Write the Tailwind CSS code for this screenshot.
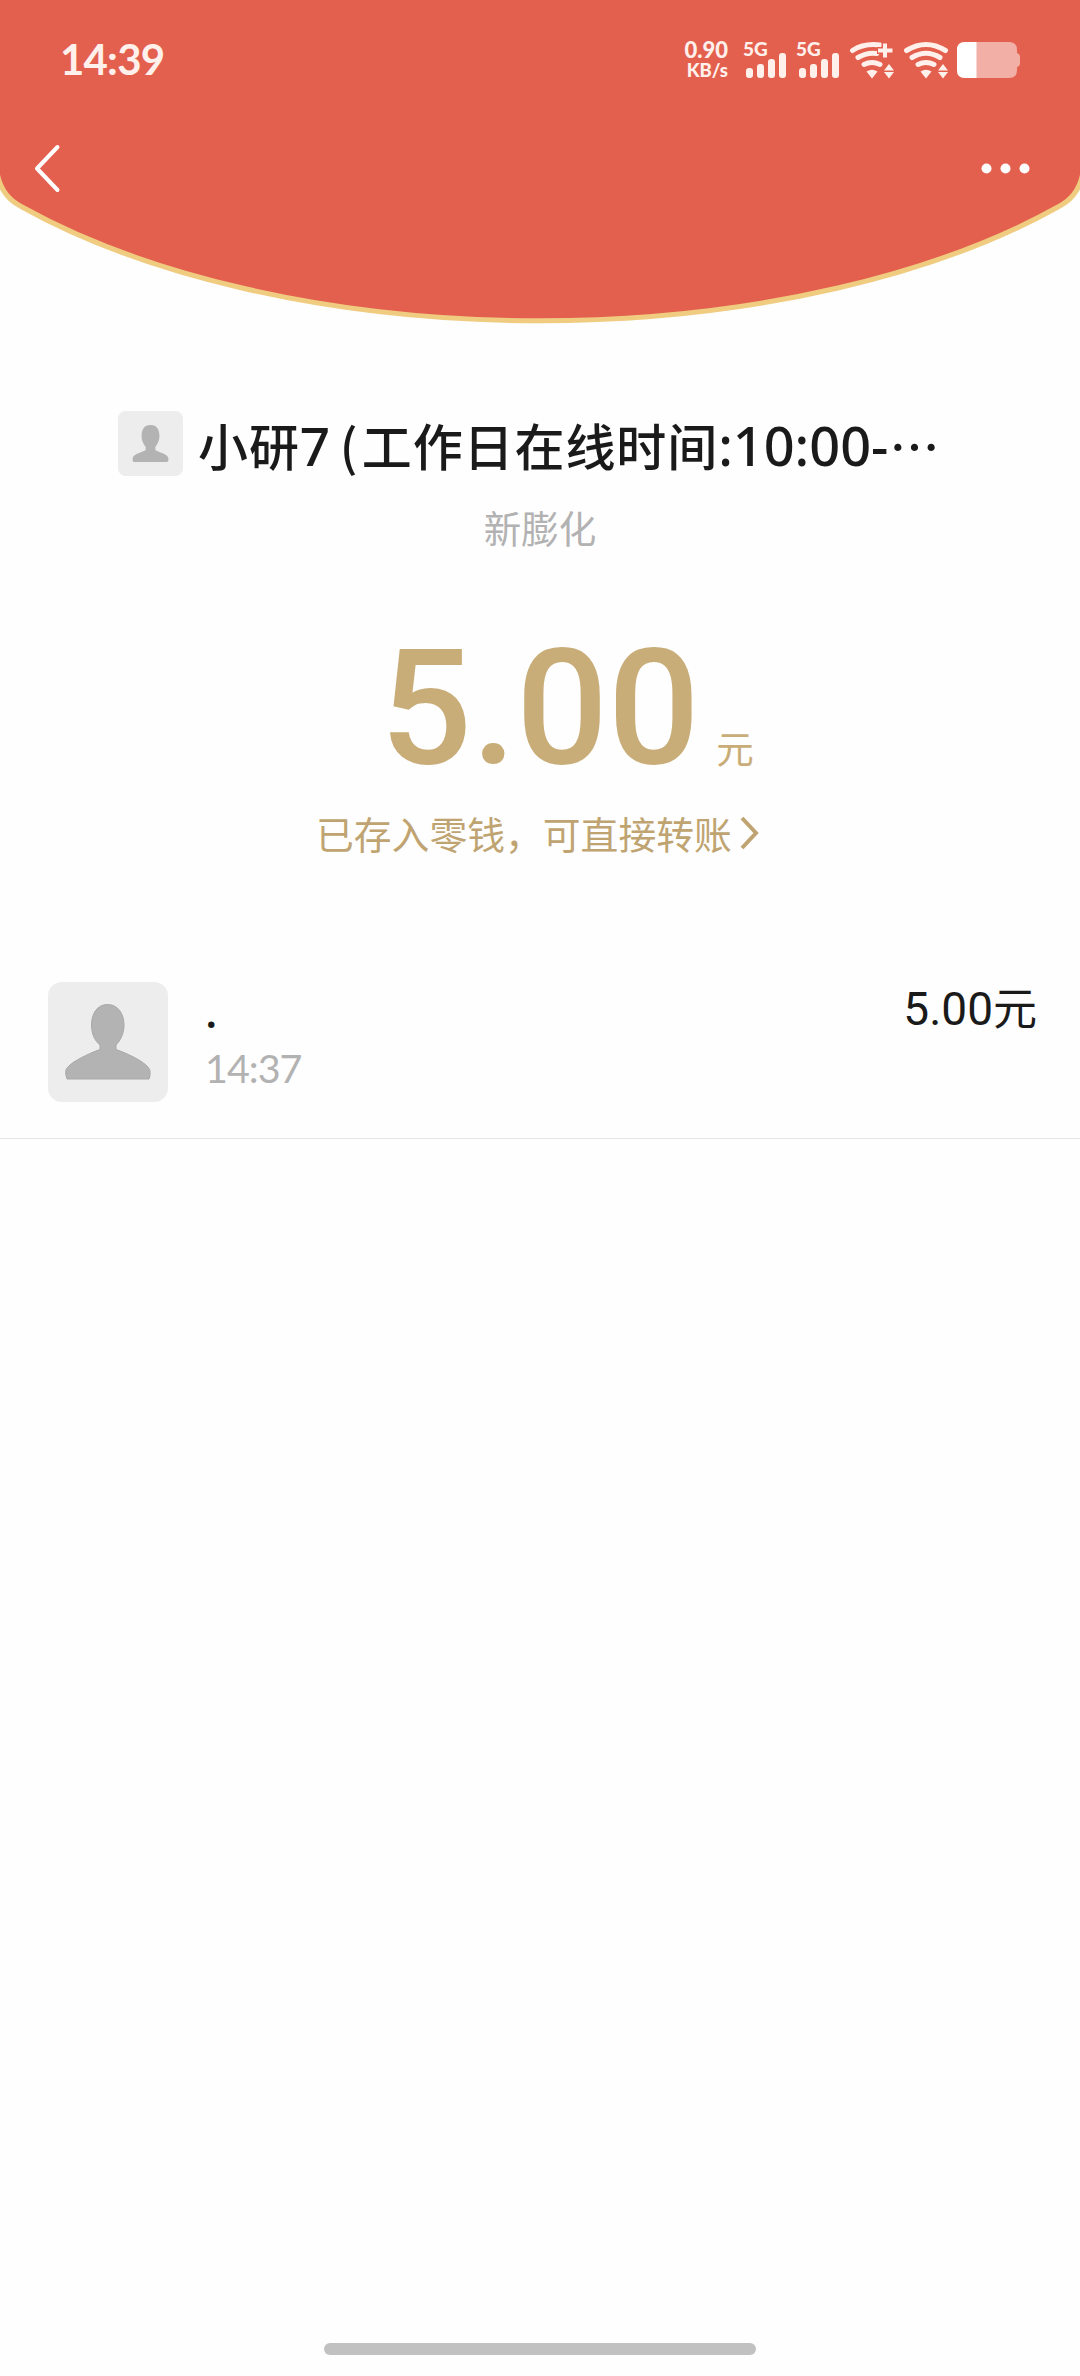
<!DOCTYPE html>
<html lang="zh-CN">
<head>
<meta charset="utf-8">
<title>红包详情</title>
<script src="https://cdn.jsdelivr.net/npm/@tailwindcss/browser@4"></script>
</head>
<body class="bg-white">
<div class="flex h-[2376px] w-[1080px] flex-col overflow-hidden bg-[#fefefe] font-['Noto_Sans_CJK_SC',sans-serif] text-[#1a1a1a]">
  <header class="relative h-[330px] shrink-0">
    <svg class="absolute inset-0" width="1080" height="330" viewBox="0 0 1080 330">
      <path d="M-4 -10V160C-4 184 6 199 22 207A683 326.6 0 0 0 1058 207C1074 199 1084 184 1084 160V-10Z" fill="#e4604e" stroke="#efcc80" stroke-width="5"/>
    </svg>
    <div class="relative flex h-[120px] items-start text-[#fff0ec]">
      <div class="ml-[60px] mt-[34px] w-[120px] whitespace-nowrap font-['Lato',sans-serif] text-[42px] leading-[50px] font-bold tracking-[-0.800px]">14:39</div>
      <div class="ml-[502px] mt-[39px] flex w-[46px] flex-col items-end whitespace-nowrap font-['Lato',sans-serif]">
        <span class="text-[22px] leading-[22px] font-black">0.90</span>
        <span class="text-[18.500px] leading-[19px] font-black">KB/s</span>
      </div>
      <div class="relative ml-[15px] mt-[40px] h-[40px] w-[43px]">
        <span class="block font-['Lato',sans-serif] text-[19px] leading-[18px] font-black">5G</span>
        <svg class="absolute inset-0" width="43" height="40" fill="currentColor"><rect x="3" y="28" width="7" height="10" rx="3"/><rect x="14" y="24" width="7" height="14" rx="3"/><rect x="25" y="19" width="7" height="19" rx="3"/><rect x="36" y="13" width="7" height="25" rx="3"/></svg>
      </div>
      <div class="relative ml-[10px] mt-[40px] h-[40px] w-[43px]">
        <span class="block font-['Lato',sans-serif] text-[19px] leading-[18px] font-black">5G</span>
        <svg class="absolute inset-0" width="43" height="40" fill="currentColor"><rect x="3" y="28" width="7" height="10" rx="3"/><rect x="14" y="24" width="7" height="14" rx="3"/><rect x="25" y="19" width="7" height="19" rx="3"/><rect x="36" y="13" width="7" height="25" rx="3"/></svg>
      </div>
      <svg class="ml-[10px] mt-[40px]" width="46" height="40" viewBox="0 0 46 40">
        <g fill="none" stroke="currentColor" stroke-width="5" stroke-linecap="round"><path d="M3.500 10.500Q15 3 31 5"/><path d="M9 17.500Q18 12 28 13.500"/><path d="M15 24.500Q23 20.500 31 24.500"/></g>
        <path d="M17.500 31.500Q23 28 28.500 31.500L23 38.500Z" fill="currentColor"/>
        <path d="M36 1V19M28 10.500H45" stroke="#e4604e" stroke-width="7"/>
        <path d="M36 3.500V17.500M29 10.500H43.500" stroke="currentColor" stroke-width="4"/>
        <path d="M40 24L45 30.500H35ZM40 38.500L45 32H35Z" fill="currentColor"/>
      </svg>
      <svg class="ml-[8px] mt-[40px]" width="46" height="40" viewBox="0 0 46 40">
        <g fill="none" stroke="currentColor" stroke-width="5" stroke-linecap="round"><path d="M3.500 10.500Q23 -1.500 42.500 10.500"/><path d="M9 17.500Q23 9 37 17.500"/><path d="M15 24.500Q23 20.500 31 24.500"/></g>
        <path d="M17.500 31.500Q23 28 28.500 31.500L23 38.500Z" fill="currentColor"/>
        <path d="M40 24L45 30.500H35ZM40 38.500L45 32H35Z" fill="currentColor"/>
      </svg>
      <svg class="ml-[8px] mt-[40px]" width="64" height="40" viewBox="0 0 64 40">
        <path d="M8 2H52Q60 2 60 10V13Q63 14 63 17V23Q63 26 60 27V30Q60 38 52 38H8Q0 38 0 30V10Q0 2 8 2Z" fill="#f1afa6"/>
        <path d="M19.500 2H8Q0 2 0 10V30Q0 38 8 38H19.500Z" fill="#fff"/>
      </svg>
    </div>
    <nav class="relative flex h-[96px] items-center justify-between pr-[49px] pl-[31px] text-white">
      <svg width="30" height="50" viewBox="0 0 30 50" fill="none" stroke="currentColor" stroke-width="4" stroke-linecap="round" stroke-linejoin="round"><path d="M26.500 4L6 25.500L26.500 47"/></svg>
      <svg width="50" height="12" viewBox="0 0 50 12" fill="currentColor"><circle cx="5.500" cy="6.500" r="5"/><circle cx="24.500" cy="6.500" r="5"/><circle cx="43.500" cy="6.500" r="5"/></svg>
    </nav>
  </header>

  <main class="flex grow flex-col">
    <div class="mt-[80px] flex h-[68px] pl-[118px]">
      <svg class="mt-px shrink-0" width="65" height="65" viewBox="0 0 120 120"><rect width="120" height="120" rx="14" fill="#ededed"/><path d="M60 26C72 26 76.500 35 76.500 46C76.500 55 72 62 69 66V72C76 77 93 79 93 88V92Q93 94 90 94H30Q27 94 27 92V88C27 79 44 77 51 72V66C48 62 43.500 55 43.500 46C43.500 35 48 26 60 26Z" fill="#b3b3b3"/></svg>
      <h1 class="ml-[15px] flex items-baseline text-[50px] leading-[68px] font-medium tracking-[0.900px] whitespace-nowrap">
        <span>小研</span><span class="w-[31px] font-['Noto_Sans',sans-serif] text-[53px]">7</span><span class="w-[31px] pl-[9px]">(</span><span>工作日在线时间</span><span class="font-['Noto_Sans',sans-serif] text-[54px] tracking-[0px]">:10:00-</span><span class="pl-px">⋯</span>
      </h1>
    </div>
    <p class="mt-[24px] text-center text-[37.500px] leading-[50px] text-[#b2b2b2]">新膨化</p>
    <div class="mt-[81px] flex h-[150px] items-baseline pl-[380px] text-[#c9ad78]">
      <span class="font-['Roboto',sans-serif] text-[162px] leading-[150px] font-medium tracking-[-0.500px]">5.00</span>
      <span class="ml-[17px] text-[37.500px] leading-[50px]">元</span>
    </div>
    <a class="mt-[25px] flex h-[50px] items-center pl-[316px] text-[37.800px] leading-[50px] text-[#bfa472]">已存入零钱，可直接转账<svg class="ml-[8px]" width="20" height="34" viewBox="0 0 20 34" fill="none" stroke="currentColor" stroke-width="4"><path d="M2 2L16 17L2 32"/></svg></a>
    <div class="mt-[122px] flex h-[159px] border-b-[1.500px] border-[#e5e5e5] pr-[43px] pl-[48px]">
      <svg class="mt-[2px]" width="120" height="120" viewBox="0 0 120 120"><rect width="120" height="120" rx="14" fill="#ededed"/><path d="M59.500 22.500C70 22.500 76 32 76 43C76 52 72 59 68 63V67.500C78 71 101 81 102 89Q102.500 94 101 97H19Q17 92 18 88C20 81 42 71 52 67.500V63C47 59 43.500 52 43.500 43C43.500 32 49 22.500 59.500 22.500Z" fill="#b3b3b3" stroke="#a8a8a8"/></svg>
      <div class="ml-[37px] flex flex-col">
        <span class="h-[62px] font-['Noto_Sans',sans-serif] text-[46px] leading-[60px] font-medium">.</span>
        <span class="font-['Lato',sans-serif] text-[39.500px] leading-[52px] tracking-[-1px] text-[#b2b2b2]">14:37</span>
      </div>
      <div class="ml-auto -mt-[4px] flex h-[60px] items-baseline"><span class="font-['Roboto',sans-serif] text-[46px] leading-[60px]">5.00</span><span class="text-[44px] leading-[60px]">元</span></div>
    </div>
  </main>
  <div class="mb-[21px] h-[12px] w-[432px] shrink-0 self-center rounded-full bg-[#c1c1c1]"></div>
</div>
</body>
</html>
